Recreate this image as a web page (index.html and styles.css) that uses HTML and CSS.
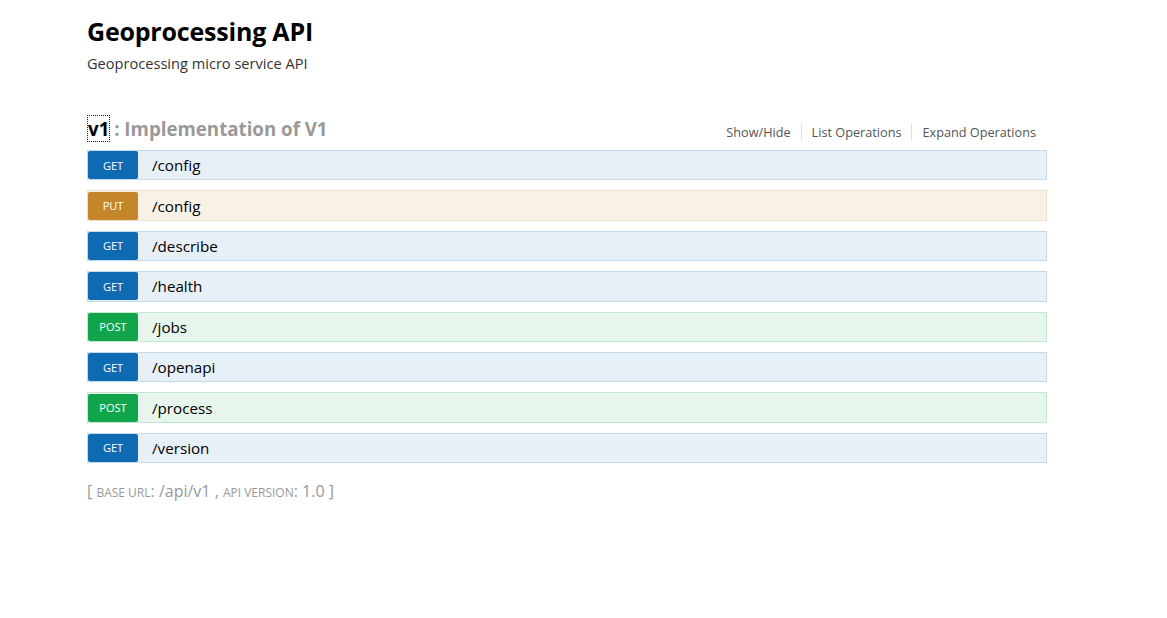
FILE: index.html
```html
<!DOCTYPE html>
<html>
<head>
<meta charset="utf-8">
<link rel="stylesheet" href="styles.css">
</head>
<body>
<div class="wrap">
  <div class="info">
    <h1 class="title">Geoprocessing API</h1>
    <div class="desc">Geoprocessing micro service API</div>
  </div>
  <div class="resource">
    <div class="heading">
      <h2><span class="name">v1</span><span class="summary"> : Implementation of V1</span></h2>
      <ul class="options">
        <li>Show/Hide</li>
        <li>List Operations</li>
        <li class="last">Expand Operations</li>
      </ul>
    </div>
    <ul class="ops">
      <li class="op get"><span class="method">GET</span><span class="path">/config</span></li>
      <li class="op put"><span class="method">PUT</span><span class="path">/config</span></li>
      <li class="op get"><span class="method">GET</span><span class="path">/describe</span></li>
      <li class="op get"><span class="method">GET</span><span class="path">/health</span></li>
      <li class="op post"><span class="method">POST</span><span class="path">/jobs</span></li>
      <li class="op get"><span class="method">GET</span><span class="path">/openapi</span></li>
      <li class="op post"><span class="method">POST</span><span class="path">/process</span></li>
      <li class="op get"><span class="method">GET</span><span class="path">/version</span></li>
    </ul>
  </div>
  <div class="footer">[ <span class="sc">base url</span>: <span class="big">/api/v1</span> , <span class="sc">api version</span>: <span class="big">1.0</span> ]</div>
</div>
</body>
</html>
```

FILE: styles.css
```css
html, body { margin: 0; padding: 0; background: #fff; }
body { font-family: "Open Sans", "DejaVu Sans", sans-serif; color: #000; }
.wrap { width: 960px; margin-left: 87px; padding-top: 14px; }
.info { margin-bottom: 40px; }
.title { font-size: 25px; font-weight: 700; margin: 0; line-height: 34px; letter-spacing: -0.2px; }
.desc { font-size: 14.6px; color: #333; line-height: 20px; margin-top: 5px; }
.heading { display: flex; justify-content: space-between; align-items: flex-end; height: 31px; margin-bottom: 6px; }
.heading h2 { margin: 0 0 2px 0; font-size: 18.7px; font-weight: 700; line-height: 26px; padding-left: 1px; }
.name { color: #000; outline: 1px dotted #222; }
.summary { color: #999; }
.options { list-style: none; margin: 0 0 4px 0; padding: 0 11px 0 0; display: flex; font-size: 12.7px; color: #555; line-height: 16px; }
.options li { padding: 0 10px; border-right: 1px solid #ddd; }
.options li.last { border-right: 0; padding-right: 0; }
.ops { list-style: none; margin: 0; padding: 0; }
.op { display: flex; align-items: center; height: 28.4px; border: 1px solid; margin-bottom: 10px; }
.method { width: 50px; height: 28px; border-radius: 2px; color: #fff; font-size: 11px; display: flex; align-items: center; justify-content: center; }
.path { margin-left: 14px; font-size: 15.2px; }
.get { background: #e7f0f7; border-color: #c3d9ec; }
.get .method { background: #0f6ab4; }
.put { background: #f9f0e6; border-color: #f0e0ca; }
.put .method { background: #c5862b; }
.post { background: #e7f6ec; border-color: #c3e8d1; }
.post .method { background: #10a54a; }
.footer { color: #999; font-size: 16px; margin-top: 17px; }
.sc { font-size: 12px; text-transform: uppercase; }
```
